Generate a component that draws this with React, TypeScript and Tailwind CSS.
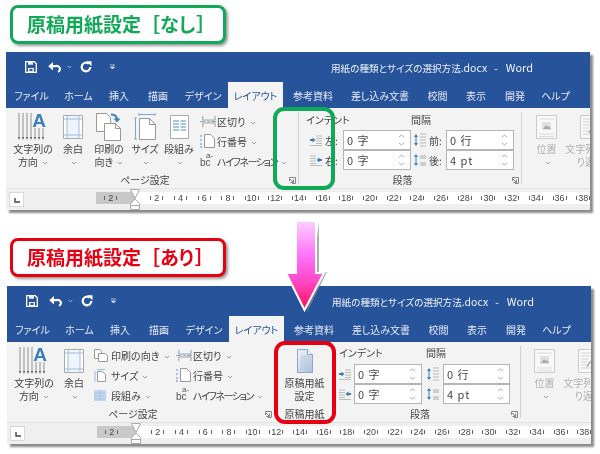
import type { ReactNode } from 'react'

const tabs = [
  { name: 'ファイル', w: 'w-[51px]' },
  { name: 'ホーム', w: 'w-[43px]' },
  { name: '挿入', w: 'w-[38px]' },
  { name: '描画', w: 'w-[40px]' },
  { name: 'デザイン', w: 'w-[50px]' },
  { name: 'レイアウト', w: 'w-[55px]', active: true },
  { name: '参考資料', w: 'w-[60px]' },
  { name: '差し込み文書', w: 'w-[74px]' },
  { name: '校閲', w: 'w-[41px]' },
  { name: '表示', w: 'w-[36px]' },
  { name: '開発', w: 'w-[42px]' },
  { name: 'ヘルプ', w: 'w-[39px]' },
]

const rulerNumbers = [2, 4, 6, 8, 10, 12, 14, 16, 18, 20, 22, 24, 26, 28, 30, 32, 34, 36, 38]

const Chevron = () => (
  <svg width="6" height="4" viewBox="0 0 6 4" className="ml-[2px] inline-block">
    <path d="M1 1l2 2 2-2" fill="none" stroke="#888" strokeWidth="0.8" />
  </svg>
)

const SaveIcon = () => (
  <svg width="12" height="12" viewBox="0 0 12 12">
    <path d="M.7.7h8.6l2 2v8.6H.7z" fill="none" stroke="#fff" strokeWidth="1.3" />
    <path d="M3 .7h5v3H3zM3 7h6v4.300H3z" fill="#fff" opacity="0.9" />
    <path d="M4.500 8h3v2h-3z" fill="#27539b" />
  </svg>
)

const UndoIcon = () => (
  <svg width="13" height="11" viewBox="0 0 13 11">
    <path d="M1.500 4.200h6.200a3 3 0 0 1 2.300 5.600" fill="none" stroke="#fff" strokeWidth="2.200" />
    <path d="M5 0L.3 4.200 5 8.400z" fill="#fff" />
  </svg>
)

const RedoIcon = () => (
  <svg width="12" height="12" viewBox="0 0 12 12">
    <path d="M8.800 2.700A4.300 4.300 0 1 0 10.300 6" fill="none" stroke="#fff" strokeWidth="2.200" />
    <path d="M6.300.3h5.200v5z" fill="#fff" />
  </svg>
)

const TextDirIcon = () => (
  <svg width="36" height="30" viewBox="0 0 36 30">
    <path d="M4 1v25M8 1v25M12 1v25M16 1v25M20 16v10M24 16v10M28 16v10" stroke="#777" strokeWidth="0.8" />
    <path d="M2.800 25l1.200 3 1.200-3zM6.800 25l1.200 3 1.200-3zM10.800 25l1.200 3 1.200-3zM14.800 25l1.200 3 1.200-3zM18.800 25l1.200 3 1.200-3zM22.800 25l1.200 3 1.200-3zM26.800 25l1.200 3 1.200-3z" fill="#666" />
    <text x="24" y="15" textAnchor="middle" fontSize="19" fontWeight="700" fontFamily="Liberation Sans" fill="#3b7dbd">A</text>
  </svg>
)

const MarginIcon = () => (
  <svg width="20" height="24" viewBox="0 0 20 24">
    <path d="M.5.500h19v23H.5z" fill="#fff" stroke="#aaa" />
    <path d="M4 1h12v22H4z" fill="#eef4fb" />
    <path d="M4 1v22M16 1v22M1 4h18M1 20h18" stroke="#9dbde0" strokeWidth="1" />
  </svg>
)

const PrintIcon = () => (
  <svg width="26" height="28" viewBox="0 0 26 28">
    <path d="M.5.500h10l4 4v14h-14z" fill="#fff" stroke="#999" />
    <path d="M8.500 10.500h11l5 5v12h-16z" fill="#fff" stroke="#999" />
    <path d="M19.500 10.500v5h5" fill="none" stroke="#999" />
    <path d="M15 1.500c4 0 6 1.500 6 5" fill="none" stroke="#3b7dbd" strokeWidth="2" />
    <path d="M17.500 5.500h7l-3.500 4z" fill="#3b7dbd" />
  </svg>
)

const SizeIcon = () => (
  <svg width="22" height="27" viewBox="0 0 22 27">
    <path d="M5.500 5.500h10l6 6v15h-16z" fill="#fff" stroke="#999" />
    <path d="M15.500 5.500v6h6" fill="none" stroke="#999" />
    <path d="M1.500 5v21M0 5h3M0 26h3M5 1.500h16M5 0v3M21 0v3" stroke="#7ba7d6" strokeWidth="1" fill="none" />
  </svg>
)

const ColumnsIcon = () => (
  <svg width="19" height="24" viewBox="0 0 19 24">
    <path d="M.5.500h18v23H.5z" fill="#fff" stroke="#aaa" />
    <path d="M3 6h6M10.500 6H16M3 9h6M10.500 9H16M3 12h6M10.500 12H16M3 15h6M10.500 15H16" stroke="#8db2dc" strokeWidth="1.500" />
  </svg>
)

const BreakIcon = () => (
  <svg width="17" height="13" viewBox="0 0 17 13">
    <path d="M3 .5v4.500h13V.5M3 12.500V8h13v4.500" fill="none" stroke="#999" />
    <path d="M0 6.500h5M8 6.500h2M12 6.500h5" stroke="#7ba7d6" />
  </svg>
)

const LineNumIcon = () => (
  <svg width="15" height="14" viewBox="0 0 15 14">
    <path d="M4.500.5h6l4 4v9h-10z" fill="#fff" stroke="#999" />
    <path d="M1 1v2M1 5v2M1 9v2M1 12v2" stroke="#7ba7d6" strokeWidth="1.300" />
  </svg>
)

const HyphenIcon = () => (
  <span className="relative inline-block h-[14px] w-[14px] font-['Liberation_Sans',sans-serif] text-[#555]">
    <span className="absolute bottom-0 left-0 text-[10px] leading-[10px]">bc</span>
    <span className="absolute left-[6px] top-[-2px] text-[8px] leading-[8px]">a-</span>
  </span>
)

const SmallPrintIcon = () => (
  <svg width="14" height="13" viewBox="0 0 14 13">
    <path d="M.5.500h5l2 2v7h-7z" fill="#fff" stroke="#999" />
    <path d="M4.500 4.500h7l2 2v6h-9z" fill="#fff" stroke="#999" />
  </svg>
)

const SmallSizeIcon = () => (
  <svg width="12" height="13" viewBox="0 0 12 13">
    <path d="M3.500 2.500h5l3 3v7h-8z" fill="#fff" stroke="#999" />
    <path d="M1 2v11M3 .5h8" stroke="#9dbde0" />
  </svg>
)

const SmallColumnsIcon = () => (
  <svg width="12" height="11" viewBox="0 0 12 11">
    <path d="M0 0h12v11H0z" fill="#c6d8ee" />
    <path d="M0 3h12M0 6h12M0 9h12M6 0v11" stroke="#a3c0e2" strokeWidth="0.8" />
  </svg>
)

const IndentLeftIcon = () => (
  <svg width="12" height="11" viewBox="0 0 12 11">
    <path d="M6 1h6M6 3.500h6M6 6h6M6 8.500h6M0 10.500h12" stroke="#aaa" strokeWidth="0.8" />
    <path d="M0 4h2.500V2.500L5.500 5 2.500 7.500V6H0z" fill="#3b7dbd" />
  </svg>
)

const IndentRightIcon = () => (
  <svg width="12" height="11" viewBox="0 0 12 11">
    <path d="M0 1h6M0 3.500h6M0 6h6M0 8.500h6M0 10.500h12" stroke="#aaa" strokeWidth="0.8" />
    <path d="M12 4H9.500V2.500L6.500 5l3 2.500V6H12z" fill="#3b7dbd" />
  </svg>
)

const SpaceBeforeIcon = () => (
  <svg width="13" height="14" viewBox="0 0 13 14">
    <path d="M3 1L1 4h4zM3 13L1 10h4z" fill="#3b7dbd" />
    <path d="M3 4v6" stroke="#3b7dbd" />
    <path d="M7 1h6M7 4h6M7 7h6M7 10h6M7 13h6" stroke="#aaa" strokeWidth="0.8" />
  </svg>
)

const SpaceAfterIcon = () => (
  <svg width="13" height="14" viewBox="0 0 13 14">
    <path d="M3 1L1 4h4zM3 13L1 10h4z" fill="#3b7dbd" />
    <path d="M3 4v6" stroke="#3b7dbd" />
    <path d="M7 3h6M7 5h6M7 10h6M7 12h6" stroke="#aaa" strokeWidth="1" />
  </svg>
)

const PositionIcon = () => (
  <svg width="21" height="24" viewBox="0 0 21 24">
    <path d="M.5.500h20v23H.5z" fill="#f8f8f8" stroke="#cacaca" />
    <path d="M3 4h15M3 19h15M3 21.500h15" stroke="#dadada" />
    <path d="M6 7h9v8H6z" fill="#e0e0e0" />
    <path d="M7 14l3-4 2 2 1-1 2 3z" fill="#aaa" />
  </svg>
)

const WrapIcon = () => (
  <svg width="21" height="24" viewBox="0 0 21 24">
    <path d="M.5.500h20v23H.5z" fill="#f8f8f8" stroke="#cacaca" />
    <path d="M3 4h15M3 7h15M3 10h8M3 13h6M3 16h8M3 19h15" stroke="#d4d4d4" />
    <path d="M9 18c2-5 5-7 9-7" fill="none" stroke="#aaa" strokeWidth="1.500" />
  </svg>
)

const ManuscriptIcon = () => (
  <svg width="16" height="24" viewBox="0 0 16 24">
    <defs>
      <linearGradient id="ms" x1="0" y1="0" x2="1" y2="1">
        <stop offset="0" stopColor="#f3f6fb" />
        <stop offset="1" stopColor="#a9bfdd" />
      </linearGradient>
    </defs>
    <path d="M.5.500h10l5 5v18H.5z" fill="url(#ms)" stroke="#8ea6c8" />
    <path d="M10.500.500v5h5" fill="#fff" stroke="#8ea6c8" />
    <path d="M3 8h10M3 11h10M3 14h10M3 17h10M3 20h10M5 6v16M8 6v16M11 6v16" stroke="#b5c4da" strokeWidth="0.6" />
  </svg>
)

const Launcher = () => (
  <svg width="7" height="7" viewBox="0 0 7 7" className="mr-[2px] shrink-0">
    <path d="M.5 4V.5H6.500V6.500H3" fill="none" stroke="#888" />
    <path d="M1 2l3 3M4.500 2.500v3h-3" fill="none" stroke="#666" strokeWidth="0.8" />
  </svg>
)

const Separator = () => <div className="my-[4px] w-px shrink-0 bg-[#d2d2d2]" />

const BigButton = ({ w, icon, lines }: { w: string; icon: ReactNode; lines: ReactNode[] }) => (
  <div className={`flex shrink-0 flex-col items-center ${w}`}>
    <div className="flex h-[34px] items-center justify-center pt-[3px]">{icon}</div>
    {lines.map((line, i) => (
      <div key={i} className="whitespace-nowrap leading-[13px]">
        {line}
      </div>
    ))}
  </div>
)

const SmallRow = ({ icon, children }: { icon: ReactNode; children: ReactNode }) => (
  <div className="flex h-[20px] items-center gap-[1px] whitespace-nowrap">
    <span className="flex w-[16px] shrink-0 items-center overflow-visible">{icon}</span>
    <span>{children}</span>
  </div>
)

const HyphenRow = () => (
  <SmallRow icon={<HyphenIcon />}>
    <span className="tracking-[-1.4px]">ハイフネーション</span> <Chevron />
  </SmallRow>
)

const Footer = ({ label, pad }: { label: string; pad: string }) => (
  <div className="flex h-[16px] items-center">
    <span className={`flex-1 text-center leading-[16px] ${pad}`}>{label}</span>
    <Launcher />
  </div>
)

const Spin = ({ value, w }: { value: string; w: string }) => (
  <div className={`flex h-[20px] items-center justify-between border border-[#b5b5b5] bg-white pl-[3px] pr-[5px] text-[11px] tracking-[1px] ${w}`}>
    <span>{value}</span>
    <span className="flex flex-col gap-[4px]">
      <svg width="7" height="4" viewBox="0 0 7 4">
        <path d="M1 3l2.500-2L6 3" fill="none" stroke="#999" strokeWidth="0.8" />
      </svg>
      <svg width="7" height="4" viewBox="0 0 7 4">
        <path d="M1 1l2.500 2L6 1" fill="none" stroke="#999" strokeWidth="0.8" />
      </svg>
    </span>
  </div>
)

const DisabledGroup = ({ first }: { first: string }) => (
  <div className={`flex shrink-0 text-[#b0b0b0] ${first}`}>
    <BigButton w="w-[29px]" icon={<PositionIcon />} lines={['位置', <Chevron key="c" />]} />
    <BigButton w="w-[58px]" icon={<WrapIcon />} lines={['文字列の折', 'り返し']} />
  </div>
)

const TextDirButton = () => (
  <BigButton w="w-[54px]" icon={<TextDirIcon />} lines={['文字列の', <>方向 <Chevron /></>]} />
)

const MarginButton = () => (
  <BigButton w="w-[26px]" icon={<MarginIcon />} lines={['余白', <Chevron key="c" />]} />
)

// 原稿用紙設定なしのリボン
const RibbonPlain = () => (
  <>
    <div className="flex w-[292px] shrink-0 flex-col">
      <div className="flex flex-1">
        <TextDirButton />
        <MarginButton />
        <BigButton w="w-[46px]" icon={<PrintIcon />} lines={['印刷の', <>向き <Chevron /></>]} />
        <BigButton w="w-[26px]" icon={<SizeIcon />} lines={['サイズ', <Chevron key="c" />]} />
        <BigButton w="w-[42px]" icon={<ColumnsIcon />} lines={['段組み', <Chevron key="c" />]} />
        <div className="pt-[3px]">
          <SmallRow icon={<BreakIcon />}>区切り <Chevron /></SmallRow>
          <SmallRow icon={<LineNumIcon />}>行番号 <Chevron /></SmallRow>
          <HyphenRow />
        </div>
      </div>
      <Footer label="ページ設定" pad="pr-[5px]" />
    </div>
    <Separator />
    <div className="flex w-[222px] shrink-0 flex-col">
      <div className="flex flex-1">
        <div className="w-[112px]">
          <div className="h-[22px] pl-[7px] pt-[5px] leading-[14px]">インデント</div>
          <div className="flex h-[20px] items-center pl-[11px]">
            <IndentLeftIcon />
            <span className="w-[21px] pl-[3px]">左:</span>
            <Spin value="0 字" w="w-[68px]" />
          </div>
          <div className="flex h-[20px] items-center pl-[11px]">
            <IndentRightIcon />
            <span className="w-[21px] pl-[3px]">右:</span>
            <Spin value="0 字" w="w-[68px]" />
          </div>
        </div>
        <div className="w-[105px]">
          <div className="h-[22px] pt-[5px] leading-[14px]">間隔</div>
          <div className="flex h-[20px] items-center pl-[2px]">
            <SpaceBeforeIcon />
            <span className="w-[20px] pl-[3px]">前:</span>
            <Spin value="0 行" w="w-[68px]" />
          </div>
          <div className="flex h-[20px] items-center pl-[2px]">
            <SpaceAfterIcon />
            <span className="w-[20px] pl-[3px]">後:</span>
            <Spin value="4 pt" w="w-[68px]" />
          </div>
        </div>
      </div>
      <Footer label="段落" pad="pr-[6px]" />
    </div>
    <Separator />
    <DisabledGroup first="pl-[10px]" />
  </>
)

// 原稿用紙設定ありのリボン
const RibbonWithPaper = () => (
  <>
    <div className="flex w-[267px] shrink-0 flex-col">
      <div className="flex flex-1">
        <TextDirButton />
        <MarginButton />
        <div className="w-[89px] shrink-0 pl-[7px] pt-[3px]">
          <SmallRow icon={<SmallPrintIcon />}>印刷の向き <Chevron /></SmallRow>
          <SmallRow icon={<SmallSizeIcon />}>サイズ <Chevron /></SmallRow>
          <SmallRow icon={<SmallColumnsIcon />}>段組み <Chevron /></SmallRow>
        </div>
        <div className="pt-[3px]">
          <SmallRow icon={<BreakIcon />}>区切り <Chevron /></SmallRow>
          <SmallRow icon={<LineNumIcon />}>行番号 <Chevron /></SmallRow>
          <HyphenRow />
        </div>
      </div>
      <Footer label="ページ設定" pad="pr-[6px]" />
    </div>
    <div className="flex w-[61px] shrink-0 flex-col items-center">
      <div className="flex-1">
        <BigButton w="w-[61px]" icon={<ManuscriptIcon />} lines={['原稿用紙', '設定']} />
      </div>
      <div className="h-[16px] leading-[16px]">原稿用紙</div>
    </div>
    <div className="flex w-[185px] shrink-0 flex-col">
      <div className="flex flex-1">
        <div className="w-[91px] pl-[4px]">
          <div className="h-[22px] pt-[4px] leading-[14px]">インデント</div>
          <div className="flex h-[20px] items-center gap-[3px]">
            <IndentLeftIcon />
            <Spin value="0 字" w="w-[68px]" />
          </div>
          <div className="flex h-[20px] items-center gap-[3px]">
            <IndentRightIcon />
            <Spin value="0 字" w="w-[68px]" />
          </div>
        </div>
        <div className="w-[86px]">
          <div className="h-[22px] pt-[4px] leading-[14px]">間隔</div>
          <div className="flex h-[20px] items-center gap-[4px]">
            <SpaceBeforeIcon />
            <Spin value="0 行" w="w-[67px]" />
          </div>
          <div className="flex h-[20px] items-center gap-[4px]">
            <SpaceAfterIcon />
            <Spin value="4 pt" w="w-[67px]" />
          </div>
        </div>
      </div>
      <Footer label="段落" pad="pr-[6px]" />
    </div>
    <Separator />
    <DisabledGroup first="pl-[9px]" />
  </>
)

const RulerCell = ({ n }: { n: number }) => (
  <span className={`flex w-[23.7px] shrink-0 items-center justify-center ${n > 9 ? 'gap-[1px]' : 'gap-[3px]'}`}>
    <i className="h-[4px] w-px bg-[#666]" />
    <span>{n}</span>
    <i className="h-[4px] w-px bg-[#666]" />
  </span>
)

const Ruler = () => (
  <div className="flex h-[22px] border-t border-[#e3e3e3] bg-[#efefef] pt-[3px]">
    <div className="ml-[3px] flex h-[15px] w-[15px] items-end justify-center border border-[#d8d8d8] bg-white pb-[3px]">
      <svg width="6" height="5" viewBox="0 0 6 5">
        <path d="M1 0v4h5" fill="none" stroke="#444" strokeWidth="1.400" />
      </svg>
    </div>
    <div className="relative ml-[72px] flex h-[12px] flex-1 overflow-hidden bg-white font-['Liberation_Sans',sans-serif] text-[9px] leading-[12px] text-[#444]">
      <div className="flex w-[39px] shrink-0 bg-[#c8c8c8] pl-[3px]">
        <RulerCell n={2} />
      </div>
      <div className="flex pl-[10px]">
        {rulerNumbers.map((n) => (
          <RulerCell key={n} n={n} />
        ))}
      </div>
    </div>
    <svg width="10" height="22" viewBox="0 0 10 22" className="absolute ml-[124px] mt-[-3px]">
      <path d="M.5.500h9L5 9.500zM.5 20.500v-6L5 10l4.500 4.500v6z" fill="#fff" stroke="#aaa" />
      <path d="M.5 16.500h9" stroke="#aaa" />
    </svg>
  </div>
)

const WordWindow = ({ className, ribbon, frame }: { className: string; ribbon: ReactNode; frame: string }) => (
  <div className={`relative w-[584px] shadow-[3px_3px_2px_#8a8a8a] ${className}`}>
    <div className="flex h-[30px] items-center bg-[#27539b] text-[#eef2f8]">
      <div className="ml-[19px] flex items-center">
        <SaveIcon />
        <span className="ml-[11px]"><UndoIcon /></span>
        <svg width="5" height="4" viewBox="0 0 6 4" className="ml-[6px]">
          <path d="M1 1l2 2 2-2" fill="none" stroke="#cfe0f5" />
        </svg>
        <span className="ml-[8px]"><RedoIcon /></span>
        <svg width="5" height="6" viewBox="0 0 5 6" className="ml-[18px]">
          <path d="M0 1h5M.5 3l2 2 2-2z" stroke="#cfe0f5" fill="#cfe0f5" strokeWidth="0.8" />
        </svg>
      </div>
      <div className="ml-[216px] flex items-baseline whitespace-nowrap text-[10.500px]">
        <span className="text-[9.600px]">用紙の種類とサイズの選択方法</span>
        <span>.docx</span>
        <span className="ml-[7px]">-</span>
        <span className="ml-[8px] text-[11px]">Word</span>
      </div>
    </div>
    <div className="flex h-[26px] bg-[#27539b] text-[#e4eaf4]">
      {tabs.map((t) => (
        <div
          key={t.name}
          className={`flex items-center justify-center whitespace-nowrap ${t.w} ${t.active ? 'bg-[#f3f3f3] text-[#27539b]' : ''}`}
        >
          {t.name}
        </div>
      ))}
    </div>
    <div className="flex h-[80px] overflow-hidden bg-[#f3f3f3] text-[#444]">{ribbon}</div>
    <Ruler />
    <div className={`absolute left-[267px] top-[55px] h-[83px] w-[62px] rounded-[11px] border-4 ${frame}`} />
  </div>
)

const Heading = ({ className, mark }: { className: string; mark: string }) => (
  <div className={`ml-[10px] flex h-[39px] w-[216px] items-center rounded-[8px] border-[3px] bg-white pl-[14px] text-[19px] font-bold shadow-[2px_2px_3px_#999] ${className}`}>
    <span>原稿用紙設定</span>
    <span className="[font-feature-settings:normal]">［</span>
    <span>{mark}</span>
    <span className="ml-[1px] [font-feature-settings:normal]">］</span>
  </div>
)

const DownArrow = () => (
  <svg width="46" height="104" viewBox="0 0 46 104" className="absolute left-[283px] top-[218px]">
    <defs>
      <linearGradient id="arrow" x1="0" y1="0" x2="0" y2="1">
        <stop offset="0" stopColor="#fbd0fb" />
        <stop offset="0.4" stopColor="#ff70fa" />
        <stop offset="0.7" stopColor="#ff45c0" />
        <stop offset="1" stopColor="#ff0a55" />
      </linearGradient>
    </defs>
    <path d="M36 4v50h8L24 94z" fill="#8a8a8a" opacity="0.7" />
    <path d="M13 3h20v52h8L21.500 92 3 55h10z" fill="url(#arrow)" stroke="#fff" strokeWidth="2" />
  </svg>
)

export default function App() {
  return (
    <div className="relative h-[454px] w-[600px] overflow-hidden bg-white pt-[5px] font-['Noto_Sans_CJK_JP',sans-serif] text-[10px] [font-feature-settings:'palt'] blur-[0.35px]">
      <Heading className="border-[#10a957] text-[#10a957]" mark="なし" />
      <WordWindow className="ml-[6px] mt-[8px]" ribbon={<RibbonPlain />} frame="border-[#10a957]" />
      <div className="mt-[28px]">
        <Heading className="border-[#e60012] text-[#e60012]" mark="あり" />
      </div>
      <WordWindow className="ml-[7px] mt-[9px]" ribbon={<RibbonWithPaper />} frame="border-[#e60012]" />
      <DownArrow />
    </div>
  )
}
